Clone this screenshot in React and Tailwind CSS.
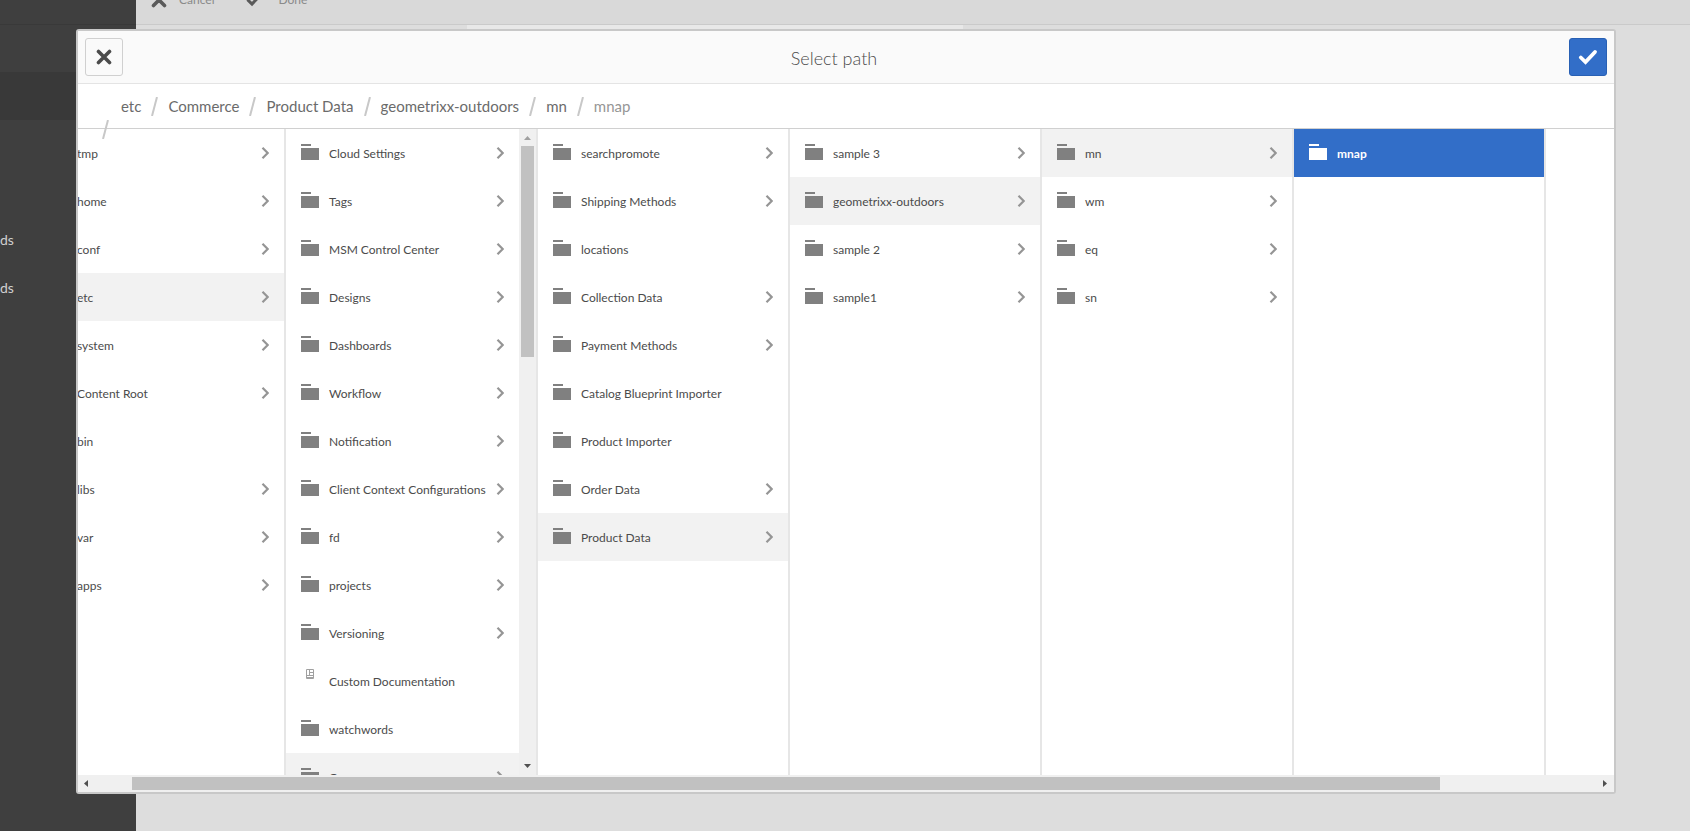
import React, { useState } from 'react';

const COLUMNS = [
  {
    id: 'root',
    active: 'etc',
    items: [
      { name: 'tmp', children: true },
      { name: 'home', children: true },
      { name: 'conf', children: true },
      { name: 'etc', children: true },
      { name: 'system', children: true },
      { name: 'Content Root', children: true },
      { name: 'bin' },
      { name: 'libs', children: true },
      { name: 'var', children: true },
      { name: 'apps', children: true },
    ],
  },
  {
    id: 'etc',
    active: 'Commerce',
    scroll: true,
    items: [
      { name: 'Cloud Settings', children: true },
      { name: 'Tags', children: true },
      { name: 'MSM Control Center', children: true },
      { name: 'Designs', children: true },
      { name: 'Dashboards', children: true },
      { name: 'Workflow', children: true },
      { name: 'Notification', children: true },
      { name: 'Client Context Configurations', children: true },
      { name: 'fd', children: true },
      { name: 'projects', children: true },
      { name: 'Versioning', children: true },
      { name: 'Custom Documentation', page: true },
      { name: 'watchwords' },
      { name: 'Commerce', children: true },
    ],
  },
  {
    id: 'commerce',
    active: 'Product Data',
    items: [
      { name: 'searchpromote', children: true },
      { name: 'Shipping Methods', children: true },
      { name: 'locations' },
      { name: 'Collection Data', children: true },
      { name: 'Payment Methods', children: true },
      { name: 'Catalog Blueprint Importer' },
      { name: 'Product Importer' },
      { name: 'Order Data', children: true },
      { name: 'Product Data', children: true },
    ],
  },
  {
    id: 'products',
    active: 'geometrixx-outdoors',
    items: [
      { name: 'sample 3', children: true },
      { name: 'geometrixx-outdoors', children: true },
      { name: 'sample 2', children: true },
      { name: 'sample1', children: true },
    ],
  },
  {
    id: 'outdoors',
    active: 'mn',
    items: [
      { name: 'mn', children: true },
      { name: 'wm', children: true },
      { name: 'eq', children: true },
      { name: 'sn', children: true },
    ],
  },
  { id: 'mn', items: [{ name: 'mnap' }] },
];

const CRUMBS = ['etc', 'Commerce', 'Product Data', 'geometrixx-outdoors', 'mn', 'mnap'];

const FolderIcon = () => (
  <svg className="w-[18px] h-4" viewBox="0 0 18 16" fill="currentColor">
    <path d="M0 0h10v2H0zM0 4h18v12H0z" />
  </svg>
);

const PageIcon = () => (
  <svg className="w-[18px] h-4 mb-3" viewBox="0 0 18 16" fill="none" stroke="currentColor">
    <path d="M5.500 3.500h7v9h-7zM8.500 3.500v6M5.500 9.500h7M8.500 6.500h4M6 11.500h6" />
  </svg>
);

const Chevron = () => (
  <svg className="w-2 h-3 text-[#959595]" viewBox="0 0 8 12" fill="none" stroke="currentColor" strokeWidth="2.200">
    <path d="M1.500 .8L6.700 6l-5.200 5.200" />
  </svg>
);

const Slash = () => (
  <svg className="w-[7px] h-[19px] text-[#c8c8c8]" viewBox="0 0 7 19" fill="none" stroke="currentColor" strokeWidth="2">
    <path d="M6 0L1 19" />
  </svg>
);

const CloseIcon = ({ className }) => (
  <svg className={className} viewBox="0 0 16 16" fill="none" stroke="currentColor" strokeWidth="3.600" strokeLinecap="round">
    <path d="M2.500 2.500l11 11M13.500 2.500l-11 11" />
  </svg>
);

const CheckIcon = ({ className }) => (
  <svg className={className} viewBox="0 0 20 16" fill="none" stroke="currentColor" strokeWidth="3.800" strokeLinecap="round">
    <path d="M2.800 8.500l4.700 4.500L17 3" />
  </svg>
);

const Column = ({ column, selected, onSelect }) => (
  <div className="flex w-[252px] shrink-0 border-r-2 border-[#e6e6e6]">
    <ul className="flex-1 overflow-hidden">
      {column.items.map(item => {
        const isSelected = selected === item.name;
        const isActive = column.active === item.name;
        return (
          <li key={item.name}>
            <button
              type="button"
              onClick={() => onSelect(item.name)}
              className={`flex h-12 w-full items-center px-[15px] text-left ${
                isSelected ? 'bg-[#326ec8] font-bold text-white' : isActive ? 'bg-[#f2f2f2] text-[#4b4b4b]' : 'text-[#4b4b4b]'
              }`}
            >
              <span className={`mr-[10px] pb-[2px] ${isSelected ? 'text-white' : item.page ? 'text-[#a0a0a0]' : 'text-[#808080]'}`}>
                {item.page ? <PageIcon /> : <FolderIcon />}
              </span>
              <span className="flex-1 whitespace-nowrap pt-[2px]">{item.name}</span>
              {item.children && <Chevron />}
            </button>
          </li>
        );
      })}
    </ul>
    {column.scroll && (
      <div className="flex w-[17px] flex-col items-center bg-[#f0f0f0]">
        <svg className="h-[17px] w-[9px] shrink-0 text-[#a0a0a0]" viewBox="0 0 9 17" fill="currentColor">
          <path d="M1 11h7L4.500 7z" />
        </svg>
        <div className="h-[211px] w-[13px] bg-[#c1c1c1]"></div>
        <svg className="mt-auto h-[17px] w-[9px] shrink-0 text-[#505050]" viewBox="0 0 9 17" fill="currentColor">
          <path d="M1 6h7L4.500 10z" />
        </svg>
      </div>
    )}
  </div>
);

const App = () => {
  const [selected, setSelected] = useState('mnap');

  return (
    <div className="relative flex h-screen overflow-hidden bg-[#dddddd] font-[Lato,sans-serif]">
      {/* Page behind the dialog */}
      <aside className="w-[136px] shrink-0 bg-[#3f3f3f] text-sm leading-6 text-[#d0d0d0]">
        <div className="h-[25px] border-b border-[#393939]"></div>
        <div className="mt-[47px] h-12 bg-[#393939]"></div>
        <div className="mt-24 h-12 pt-3">ds</div>
        <div className="h-12 pt-3">ds</div>
      </aside>
      <main className="flex flex-1 flex-col">
        <div className="flex h-[25px] shrink-0 items-start border-b border-[#cacaca] bg-[#d9d9d9] pl-[15px] text-xs text-[#8a8a8a]">
          <button type="button" className="-mt-2 flex items-center gap-3">
            <CloseIcon className="h-4 w-4 text-[#5a5a5a]" />
            Cancel
          </button>
          <button type="button" className="-mt-2 ml-8 flex items-center gap-4">
            <CheckIcon className="h-4 w-4 text-[#5a5a5a]" />
            Done
          </button>
        </div>
        <div className="ml-[331px] h-8 w-[496px] bg-[#e8e8e8]"></div>
      </main>

      {/* Path picker */}
      <div
        role="dialog"
        aria-labelledby="picker-title"
        className="absolute bottom-[37px] left-[76px] right-[74px] top-[29px] flex flex-col overflow-hidden rounded-[3px] border-2 border-[#c8c8c8] bg-white"
      >
        <header className="flex h-[53px] shrink-0 items-center justify-between border-b border-[#e4e4e4] bg-[#fafafa] px-[7px]">
          <button type="button" aria-label="Close" className="flex h-[38px] w-[38px] items-center justify-center rounded-[3px] border border-[#d0d0d0]">
            <CloseIcon className="h-4 w-4 text-[#4b4b4b]" />
          </button>
          <h2 id="picker-title" className="pr-6 pt-[2px] text-lg font-light text-[#4b4b4b]">Select path</h2>
          <button type="button" aria-label="Confirm" className="flex h-[38px] w-[38px] items-center justify-center rounded-[3px] border border-[#2860b4] bg-[#326ec8] text-white">
            <CheckIcon className="h-4 w-5" />
          </button>
        </header>

        <nav className="relative flex h-[45px] shrink-0 items-center gap-[10px] border-b border-[#d0d0d0] pl-[43px] text-[15px] text-[#6b6b6b]">
          <span className="absolute left-[24px] top-[36px]"><Slash /></span>
          {CRUMBS.map((crumb, i) => (
            <React.Fragment key={crumb}>
              {i > 0 && <Slash />}
              <a href="#" className={i === CRUMBS.length - 1 ? 'text-[#969696]' : ''}>{crumb}</a>
            </React.Fragment>
          ))}
        </nav>

        <div className="-ml-11 flex min-h-0 flex-1 overflow-hidden text-xs">
          {COLUMNS.map(column => (
            <Column
              key={column.id}
              column={column}
              selected={column.id === 'mn' ? selected : null}
              onSelect={setSelected}
            />
          ))}
        </div>

        <div className="flex h-[17px] shrink-0 items-center justify-between bg-[#f0f0f0] px-[5px] text-[#505050]">
          <svg className="h-[9px] w-[7px]" viewBox="0 0 7 9" fill="currentColor"><path d="M5 1v7L1 4.500z" /></svg>
          <div className="ml-[42px] mr-[162px] h-[13px] flex-1 bg-[#c1c1c1]"></div>
          <svg className="h-[9px] w-[7px]" viewBox="0 0 7 9" fill="currentColor"><path d="M1 1v7l4-3.500z" /></svg>
        </div>
      </div>
    </div>
  );
};

export default App;
